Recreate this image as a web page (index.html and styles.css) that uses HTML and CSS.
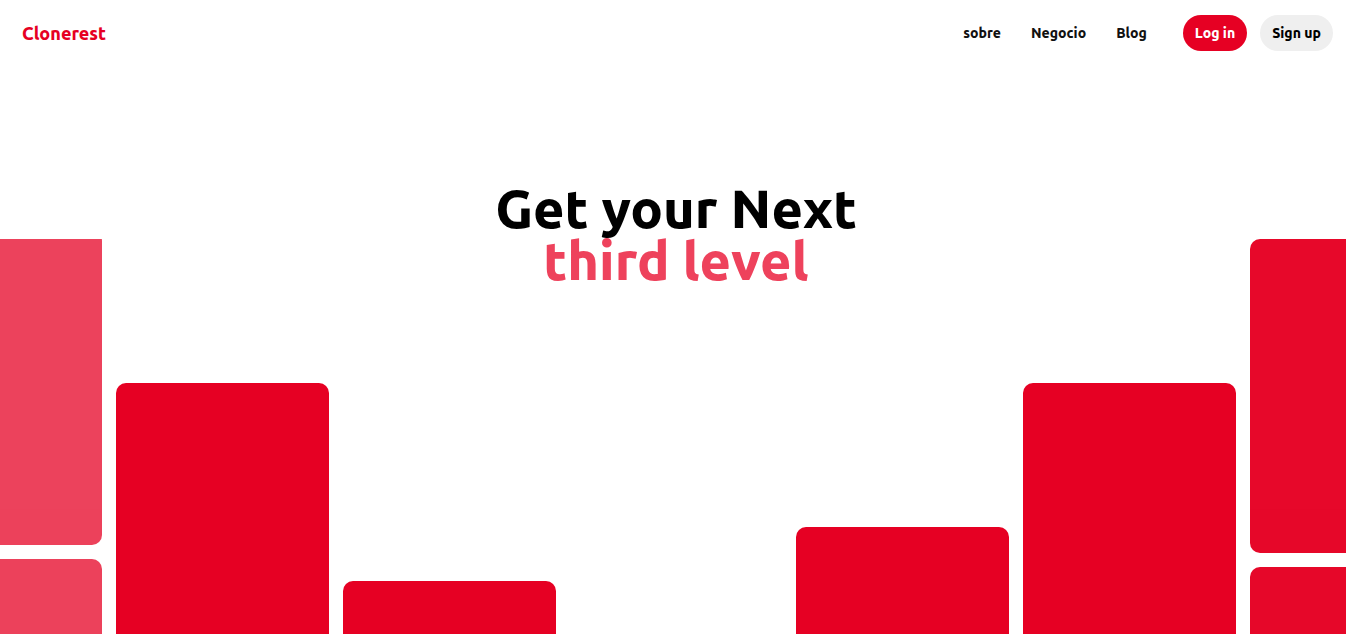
FILE: index.html
```html
<!DOCTYPE html>
<html lang="es">
<head>
<meta charset="utf-8">
<meta name="viewport" content="width=device-width, initial-scale=1">
<title>Clonerest</title>
<link rel="stylesheet" href="styles.css">
</head>
<body>
<header class="header">
  <a class="brand" href="#">Clonerest</a>
  <nav class="nav">
    <a class="nav-link" href="#">sobre</a>
    <a class="nav-link" href="#">Negocio</a>
    <a class="nav-link" href="#">Blog</a>
  </nav>
  <div class="actions">
    <button class="button button-primary" type="button">Log in</button>
    <button class="button" type="button">Sign up</button>
  </div>
</header>
<main class="hero">
  <h1 class="title">Get your Next <span class="topic">third level</span></h1>
  <div class="board">
    <div class="column column-leaving"><div class="card"></div><div class="card"></div></div>
    <div class="column column-high"><div class="card"></div></div>
    <div class="column column-low"><div class="card"></div></div>
    <div class="column"></div>
    <div class="column column-middle"><div class="card"></div></div>
    <div class="column column-high"><div class="card"></div></div>
    <div class="column column-settled"><div class="card"></div><div class="card"></div></div>
  </div>
</main>
</body>
</html>
```

FILE: styles.css
```css
* {
  box-sizing: border-box;
}

body {
  display: flex;
  flex-direction: column;
  height: 100vh;
  margin: 0;
  overflow: hidden;
  background: #fff;
  color: #000;
  font-family: Ubuntu, "Noto Sans", sans-serif;
  font-size: 14px;
  font-weight: 900;
}

.header {
  display: flex;
  align-items: center;
  padding: 15px 13px 15px 22px;
}

.brand {
  margin-right: auto;
  color: #e60023;
  font-size: 18px;
  line-height: 22px;
  text-decoration: none;
}

.nav {
  display: flex;
  gap: 30px;
  margin-right: 36px;
}

.nav-link {
  color: #111;
  text-decoration: none;
}

.actions {
  display: flex;
  gap: 13px;
}

.button {
  height: 36px;
  padding: 0 12px;
  border: 0;
  border-radius: 18px;
  background: #efefef;
  color: #000;
  font: inherit;
  cursor: pointer;
}

.button-primary {
  background: #e60023;
  color: #fff;
}

.hero {
  display: flex;
  flex: 1;
  flex-direction: column;
  min-height: 0;
  padding: 116px 0 0 6px;
  overflow: hidden;
}

.title {
  z-index: 1;
  margin: 0;
  font-size: 54px;
  line-height: 52px;
  font-weight: 900;
  text-align: center;
}

.topic {
  display: block;
  color: #ee425c;
}

.board {
  display: grid;
  flex: 1;
  grid-template-columns: repeat(7, 1fr);
  gap: 14px;
  min-height: 0;
  margin: -47px -117px 0;
  overflow: hidden;
}

.column {
  display: flex;
  flex-direction: column;
  gap: 14px;
}

.column-leaving {
  margin-top: -8px;
  opacity: 0.74;
}

.column-high {
  padding-top: 144px;
}

.column-middle {
  padding-top: 288px;
}

.column-low {
  padding-top: 342px;
}

.column-settled {
  opacity: 0.97;
}

.card {
  flex: none;
  height: 314px;
  border-radius: 10px;
  background: #e60023;
}
```
